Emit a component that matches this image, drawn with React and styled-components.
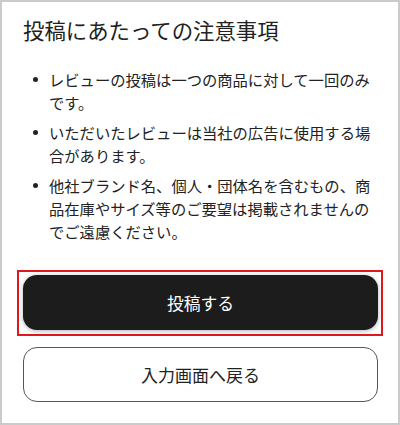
import React from 'react';
import styled, { createGlobalStyle } from 'styled-components';

// 페이지 기본 스타일
const GlobalStyle = createGlobalStyle`
  html, body {
    margin: 0;
    padding: 0;
    background: #ffffff;
  }
  body {
    font-family: 'Noto Sans CJK JP', 'Noto Sans', sans-serif;
    color: #222222;
  }
`;

// 전체 프레임 (회색 테두리)
const Frame = styled.div`
  box-sizing: border-box;
  width: 400px;
  height: 425px;
  border: 2px solid #cbcbcb;
  padding: 13px 20px 0 21px;
  display: flex;
  flex-direction: column;
  background: #ffffff;
`;

const Title = styled.h2`
  margin: 0;
  font-size: 21.4px;
  font-weight: 400;
  line-height: 30px;
  letter-spacing: 0;
  color: #222222;
`;

const List = styled.ul`
  list-style: none;
  margin: 23px 0 0;
  padding: 0;
  display: flex;
  flex-direction: column;
  gap: 7px;
`;

const Item = styled.li`
  display: flex;
  font-size: 15.3px;
  line-height: 23px;
  color: #222222;
`;

// 글머리 점
const Dot = styled.span`
  flex: 0 0 26px;
  height: 23px;
  display: flex;
  align-items: center;

  &::before {
    content: '';
    width: 5px;
    height: 5px;
    margin-left: 10px;
    border-radius: 50%;
    background: #222222;
  }
`;

const ItemText = styled.span`
  flex: 1;
`;

const Actions = styled.div`
  margin-top: 27px;
  display: flex;
  flex-direction: column;
  gap: 11px;
`;

// 빨간 강조 테두리
const Highlight = styled.div`
  margin: 0 -5px 0 -6px;
  padding: 3px 3px 4px 4px;
  border: 2px solid #e0171f;
`;

const Button = styled.button`
  box-sizing: border-box;
  width: 100%;
  height: 55px;
  border-radius: 14px;
  font-family: 'Noto Sans CJK JP', 'Noto Sans', sans-serif;
  font-size: ${(p) => (p.$primary ? '16.8px' : '17px')};
  font-weight: 400;
  cursor: pointer;
  display: flex;
  align-items: center;
  justify-content: center;
  background: ${(p) => (p.$primary ? '#1c1c1c' : '#ffffff')};
  color: ${(p) => (p.$primary ? '#ffffff' : '#222222')};
  border: ${(p) => (p.$primary ? 'none' : '1.5px solid #555555')};
  box-shadow: ${(p) => (p.$primary ? '0 1px 5px rgba(0, 0, 0, 0.3)' : 'none')};
  padding: 0;
`;

const notes = [
  'レビューの投稿は一つの商品に対して一回のみです。',
  'いただいたレビューは当社の広告に使用する場合があります。',
  '他社ブランド名、個人・団体名を含むもの、商品在庫やサイズ等のご要望は掲載されませんのでご遠慮ください。',
];

const App = () => (
  <>
    <GlobalStyle />
    <Frame>
      <Title>投稿にあたっての注意事項</Title>
      <List>
        {notes.map((n) => (
          <Item key={n}>
            <Dot />
            <ItemText>{n}</ItemText>
          </Item>
        ))}
      </List>
      <Actions>
        <Highlight>
          <Button $primary>投稿する</Button>
        </Highlight>
        <Button>入力画面へ戻る</Button>
      </Actions>
    </Frame>
  </>
);

export default App;
